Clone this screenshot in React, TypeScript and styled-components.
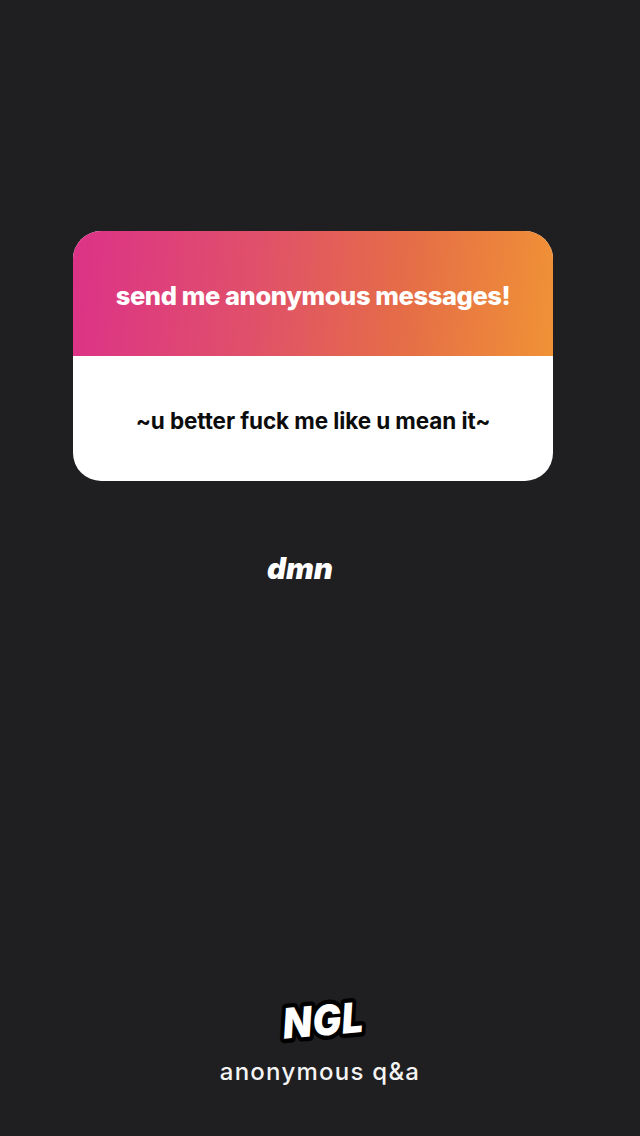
import React from "react";
import styled, { createGlobalStyle } from "styled-components";

const GlobalStyle = createGlobalStyle`
  html, body {
    margin: 0;
    padding: 0;
    background: #1f1e20;
  }
`;

const Page = styled.div`
  width: 640px;
  height: 1136px;
  display: flex;
  flex-direction: column;
  background: #1f1e20;
  font-family: Inter, "Liberation Sans", sans-serif;
  overflow: hidden;
`;

const Card = styled.div`
  width: 480px;
  height: 250px;
  margin: 231px 0 0 73px;
  border-radius: 28px;
  overflow: hidden;
  background: #fff;
  display: flex;
  flex-direction: column;
`;

const CardHead = styled.div`
  height: 125px;
  display: flex;
  align-items: center;
  justify-content: center;
  padding-top: 4px;
  box-sizing: border-box;
  background: linear-gradient(95deg, #dc3288 0%, #e0506a 38%, #e56c48 68%, #f09236 100%);
  color: #fff;
  font-size: 25.5px;
  font-weight: 800;
  letter-spacing: -0.4px;
  white-space: nowrap;
`;

const CardBody = styled.div`
  flex: 1;
  display: flex;
  align-items: center;
  justify-content: center;
  padding-top: 4px;
  box-sizing: border-box;
  color: #0c0c0c;
  font-size: 22.5px;
  font-weight: 700;
  letter-spacing: -0.1px;
  white-space: nowrap;
`;

const Reply = styled.div`
  width: 600px;
  margin-top: 68px;
  text-align: center;
  color: #fff;
  font-size: 29.5px;
  line-height: 38px;
  font-weight: 900;
  font-style: italic;
`;

const Footer = styled.div`
  margin-top: auto;
  padding-bottom: 49px;
  display: flex;
  flex-direction: column;
  align-items: center;
  gap: 1px;
`;

const Logo = styled.svg`
  display: block;
  margin-left: 5px;
`;

const LogoText = styled.text`
  fill: #fff;
  stroke: #000;
  stroke-width: 8px;
  stroke-linejoin: round;
  paint-order: stroke fill;
  font-family: Inter, "Liberation Sans", sans-serif;
  font-size: 38px;
  font-weight: 900;
  font-style: italic;
  letter-spacing: 0.5px;
`;

const Caption = styled.div`
  color: #f4f4f4;
  font-size: 24px;
  line-height: 30px;
  font-weight: 500;
  letter-spacing: 1.25px;
`;

export default function App() {
  return (
    <Page>
      <GlobalStyle />
      <Card>
        <CardHead>send me anonymous messages!</CardHead>
        <CardBody>~u better fuck me like u mean it~</CardBody>
      </Card>
      <Reply>dmn</Reply>
      <Footer>
        <Logo width="112" height="72" viewBox="0 0 112 72">
          <g transform="rotate(-5 56 36) translate(56 36) scale(1 1.1) translate(-56 -36)">
            <LogoText x="56" y="50" textAnchor="middle">
              NGL
            </LogoText>
          </g>
        </Logo>
        <Caption>anonymous q&amp;a</Caption>
      </Footer>
    </Page>
  );
}
